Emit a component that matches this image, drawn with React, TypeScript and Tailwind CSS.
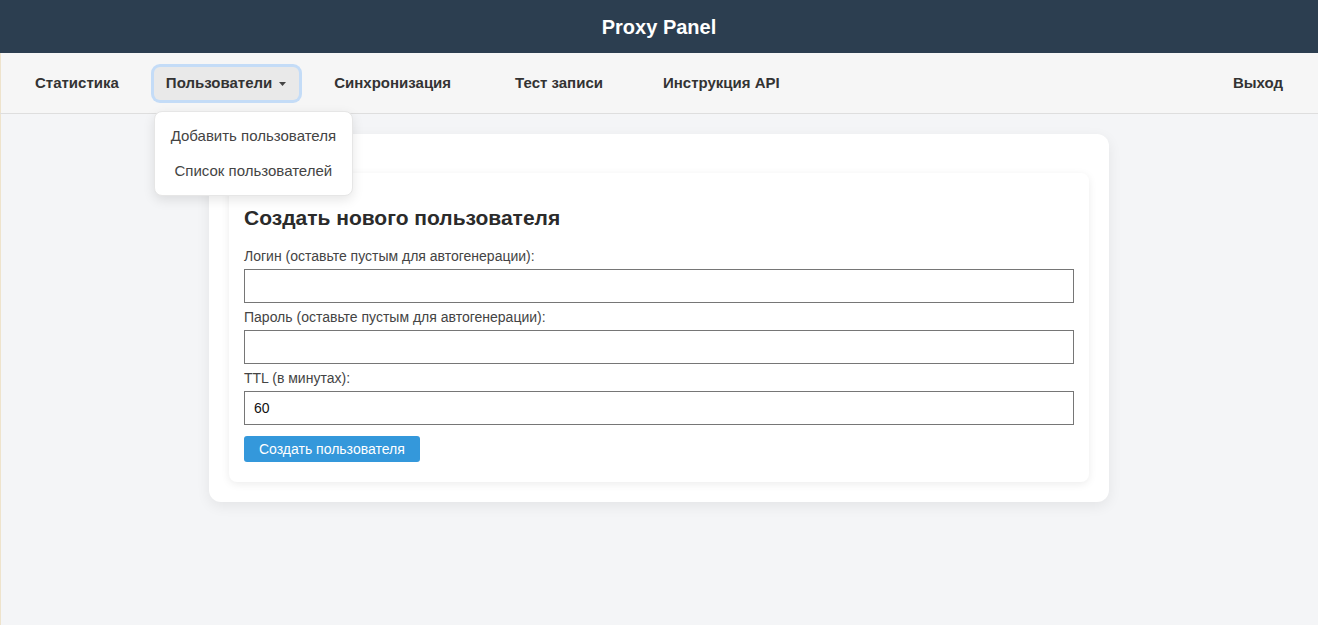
const navItems = ["Синхронизация", "Тест записи", "Инструкция API"];

function Field({ label, value }: { label: string; value?: string }) {
  return (
    <div className="mt-[6px]">
      <label className="block text-[14px] leading-[17px] text-[#444]">{label}</label>
      <input
        type="text"
        defaultValue={value}
        className="mt-[4px] block h-[34px] w-full border border-[#767676] bg-white px-[9px] text-[14px] text-[#111] outline-none"
      />
    </div>
  );
}

export default function App() {
  return (
    <div className="flex min-h-[625px] flex-col bg-[#f4f5f7] font-['Liberation_Sans',Arial,sans-serif] text-[#333]">
      <header className="flex h-[53px] items-center justify-center bg-[#2c3e50]">
        <h1 className="text-[20px] font-bold text-white">Proxy Panel</h1>
      </header>

      <div className="flex-1 shadow-[inset_1px_0_0_#eee3cc]">
        <nav className="flex h-[61px] items-center border-b border-[#dedede] bg-[#f6f6f6] pl-[35px] pr-[35px] pt-[1px] text-[15px] font-bold text-[#333] shadow-[inset_1px_0_0_#eee3cc]">
          <span>Статистика</span>

          <div className="relative ml-[35px]">
            <button
              type="button"
              className="flex h-[33px] items-center gap-[6px] rounded-[6px] bg-[#e9e9e9] pl-[12px] pr-[13px] ring-[3px] ring-[#c4dcf7]"
            >
              Пользователи
              <svg width="7" height="4" viewBox="0 0 7 4" className="ml-[1px] mt-[1px]">
                <path d="M0 0h7L3.5 4z" fill="#444" />
              </svg>
            </button>
            <div className="absolute left-0 top-[44px] z-10 w-[199px] rounded-[8px] border border-[#e6e6e6] bg-white pb-[6px] pt-[7px] text-center text-[15px] font-normal text-[#444] shadow-[0_4px_12px_rgba(0,0,0,0.1)]">
              <div className="flex h-[35px] items-center justify-center">Добавить пользователя</div>
              <div className="flex h-[35px] items-center justify-center">Список пользователей</div>
            </div>
          </div>

          <span className="ml-[35px]">{navItems[0]}</span>
          <span className="ml-[64px]">{navItems[1]}</span>
          <span className="ml-[60px]">{navItems[2]}</span>
          <span className="ml-auto">Выход</span>
        </nav>

        <main className="px-5 pb-10 pt-[20px]">
          <div className="mx-auto w-[900px] rounded-[12px] bg-white px-[20px] pb-[20px] pt-[39px] shadow-[0_4px_14px_rgba(0,0,0,0.07)]">
            <div className="rounded-[8px] bg-white px-[15px] pb-[20px] pt-[33px] shadow-[0_2px_8px_rgba(0,0,0,0.08)]">
              <h2 className="text-[21px] font-bold leading-[24px] text-[#2b2b2b]">Создать нового пользователя</h2>
              <div className="mt-[18px]">
                <Field label="Логин (оставьте пустым для автогенерации):" />
                <Field label="Пароль (оставьте пустым для автогенерации):" />
                <Field label="TTL (в минутах):" value="60" />
              </div>
              <button
                type="button"
                className="mt-[11px] h-[26px] rounded-[3px] bg-[#3498db] px-[15px] text-[14px] text-white"
              >
                Создать пользователя
              </button>
            </div>
          </div>
        </main>
      </div>
    </div>
  );
}
